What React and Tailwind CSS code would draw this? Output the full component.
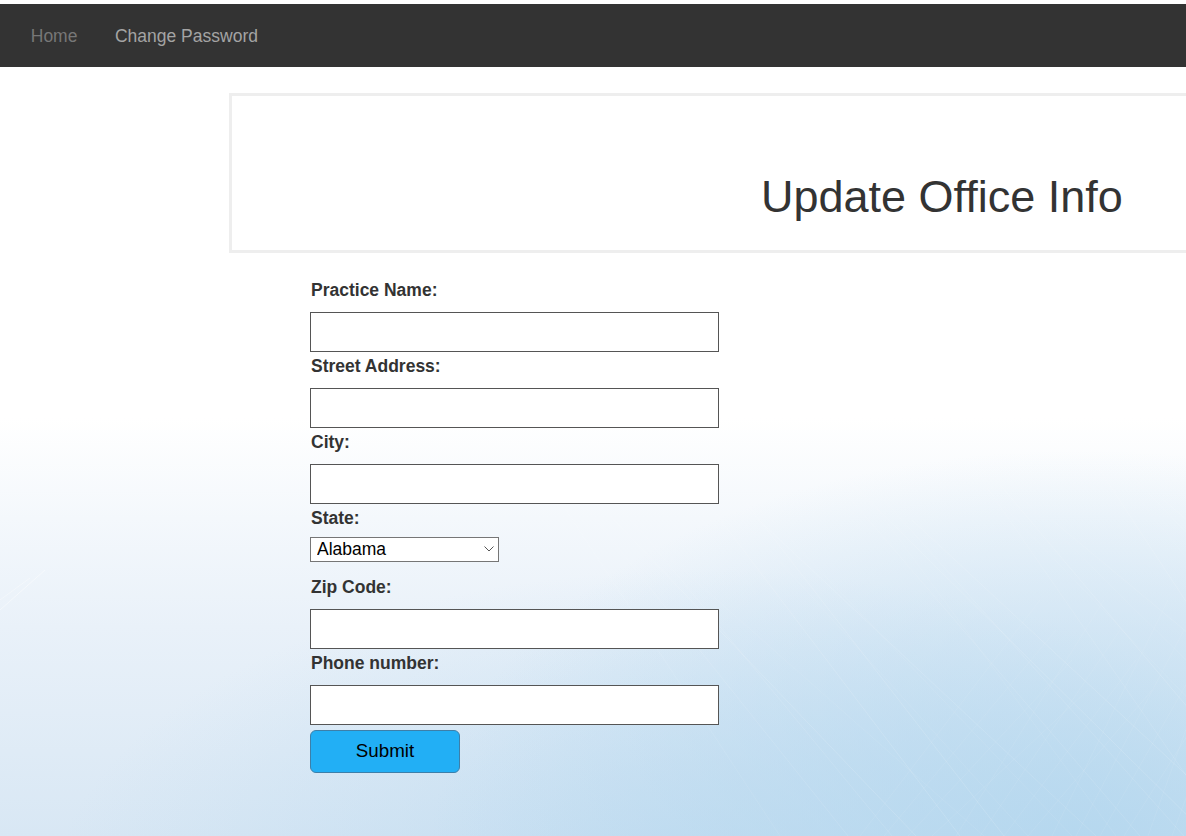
import React from "react";

const font = { fontFamily: '"Liberation Sans", Arial, sans-serif' };

function Field({ label, first }) {
  return (
    <div className="flex flex-col">
      <label className={`block h-[25px] pl-[1px] text-[17.5px] leading-[25px] font-bold text-[#333] ${first ? "" : "mt-[2px]"} mb-[9px]`}>
        {label}
      </label>
      <input type="text" className="block h-[40px] w-[409px] border border-[#555] bg-white px-2 text-[17.5px] outline-none" />
    </div>
  );
}

function Streaks() {
  const lines = [];
  for (let i = 0; i < 26; i++) {
    const x1 = 520 + i * 28;
    lines.push(
      <line key={"a" + i} x1={x1} y1={440 + (i % 5) * 20} x2={x1 + 260 + (i % 4) * 40} y2={836} stroke="white" strokeOpacity={0.08 + (i % 3) * 0.03} strokeWidth="1" />
    );
  }
  for (let i = 0; i < 14; i++) {
    const x1 = 860 + i * 24;
    lines.push(
      <line key={"b" + i} x1={x1} y1={836} x2={x1 + 180 - i * 8} y2={600 + (i % 4) * 30} stroke="white" strokeOpacity={0.08} strokeWidth="1" />
    );
  }
  lines.push(<line key="c1" x1={0} y1={610} x2={45} y2={570} stroke="white" strokeOpacity={0.45} strokeWidth="1" />);
  lines.push(<line key="c2" x1={0} y1={600} x2={30} y2={578} stroke="white" strokeOpacity={0.35} strokeWidth="1" />);
  return (
    <svg className="pointer-events-none absolute inset-0 h-full w-full" viewBox="0 0 1186 836" preserveAspectRatio="none">
      {lines}
    </svg>
  );
}

export default function App() {
  return (
    <div
      className="relative h-[836px] w-full overflow-hidden"
      style={{
        ...font,
        background:
          "radial-gradient(ellipse 650px 400px at 1080px 850px, rgba(178,214,238,0.9), rgba(178,214,238,0) 100%), radial-gradient(ellipse 650px 330px at 700px 900px, rgba(188,218,240,0.8), rgba(188,218,240,0) 100%), linear-gradient(180deg, #ffffff 0%, #ffffff 50%, #f4f8fc 62%, #e9f1f9 75%, #d8e7f4 100%)",
      }}
    >
      <Streaks />
      <div className="relative">
        <div className="h-[4px] bg-white" />
        <nav className="flex h-[63px] items-center bg-[#333333] pl-[12px]">
          <a className="px-[18.75px] pt-[1px] text-[17.5px] leading-[25px] text-[#777777]">Home</a>
          <a className="px-[18.75px] pt-[1px] text-[17.5px] leading-[25px] text-[#a4a4a4]">Change Password</a>
        </nav>

        <div className="mt-[26px] flex">
          <div className="ml-[229px] h-[160px] w-[1000px] shrink-0 border-[3px] border-[#eeeeee] bg-white">
            <h1 className="pl-[529px] pt-[76px] text-[45px] leading-[49.5px] font-normal text-[#333]">Update Office Info</h1>
          </div>
        </div>

        <form className="ml-[310px] mt-[25px] flex flex-col">
          <Field label="Practice Name:" first />
          <Field label="Street Address:" />
          <Field label="City:" />
          <div className="flex flex-col">
            <label className="mt-[2px] mb-[6px] block h-[25px] pl-[1px] text-[17.5px] leading-[25px] font-bold text-[#333]">State:</label>
            <div className="relative h-[25px] w-[189px]">
              <select className="block h-[25px] w-[189px] appearance-none border border-[#767676] bg-white pl-[6px] text-[17.5px] leading-[23px] text-black outline-none">
                <option>Alabama</option>
              </select>
              <svg className="pointer-events-none absolute right-[5px] top-[9px]" width="10" height="6" viewBox="0 0 10 6">
                <polyline points="0.5,0.5 5,5 9.5,0.5" fill="none" stroke="#555" strokeWidth="1" />
              </svg>
            </div>
          </div>
          <div className="flex flex-col">
            <label className="mt-[13px] mb-[9px] block h-[25px] pl-[1px] text-[17.5px] leading-[25px] font-bold text-[#333]">Zip Code:</label>
            <input type="text" className="block h-[40px] w-[409px] border border-[#555] bg-white px-2 text-[17.5px] outline-none" />
          </div>
          <Field label="Phone number:" />
          <button type="button" className="mt-[5px] h-[43px] w-[150px] rounded-[6px] border border-[#3d7fa9] bg-[#22aff5] text-[18.75px] text-black">
            Submit
          </button>
        </form>
      </div>
    </div>
  );
}
